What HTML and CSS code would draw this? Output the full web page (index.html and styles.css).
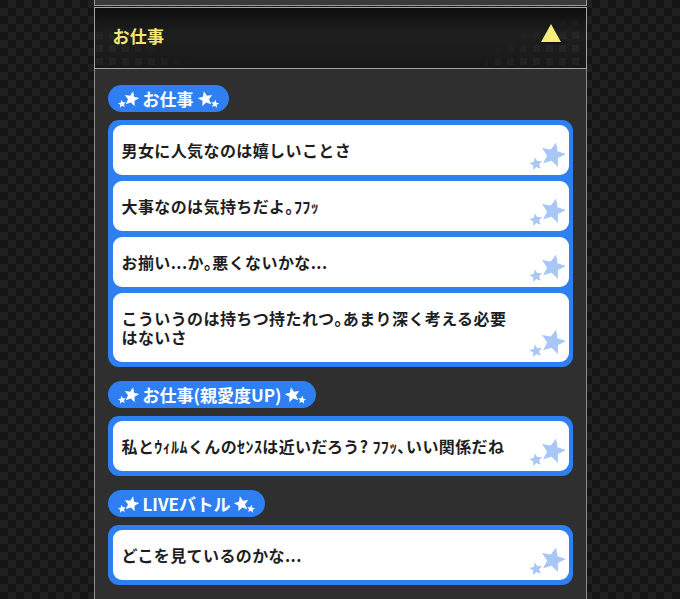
FILE: index.html
```html
<!DOCTYPE html>
<html lang="ja">
<head>
    <meta charset="UTF-8">
    <meta name="viewport" content="width=device-width, initial-scale=1.0">
    <title>お仕事</title>
    <link rel="stylesheet" href="styles.css">
</head>
<body>
    <!-- 星の形 (共通) -->
    <svg class="defs" width="0" height="0" aria-hidden="true">
        <defs>
            <polygon id="star" points="0,-10 2.65,-3.64 9.51,-3.09 4.28,1.39 5.88,8.09 0,4.5 -5.88,8.09 -4.28,1.39 -9.51,-3.09 -2.65,-3.64"/>
        </defs>
    </svg>

    <div class="page">
        <div class="prev-panel"></div>

        <div class="panel">
            <div class="panel-head">
                <h2 class="panel-title">お仕事</h2>
                <span class="toggle"></span>
            </div>

            <div class="panel-body">
                <section class="group">
                    <div class="badge">
                        <svg class="badge-stars" viewBox="0 0 22 22"><use href="#star" transform="translate(5 16) rotate(-8) scale(.42)"/><use href="#star" transform="translate(14.5 11) rotate(12) scale(.78)"/></svg>
                        <span>お仕事</span>
                        <svg class="badge-stars" viewBox="0 0 22 22"><use href="#star" transform="translate(7.5 11) rotate(-12) scale(.78)"/><use href="#star" transform="translate(17 16) rotate(8) scale(.42)"/></svg>
                    </div>
                    <ul class="lines">
                        <li class="line">男女に人気なのは嬉しいことさ<svg class="line-stars" viewBox="0 0 40 30"><use href="#star" transform="translate(10 22) rotate(-10) scale(.68)"/><use href="#star" transform="translate(27 13) rotate(14) scale(1.3)"/></svg></li>
                        <li class="line">大事なのは気持ちだよ｡ﾌﾌｯ<svg class="line-stars" viewBox="0 0 40 30"><use href="#star" transform="translate(10 22) rotate(-10) scale(.68)"/><use href="#star" transform="translate(27 13) rotate(14) scale(1.3)"/></svg></li>
                        <li class="line">お揃い...か｡悪くないかな...<svg class="line-stars" viewBox="0 0 40 30"><use href="#star" transform="translate(10 22) rotate(-10) scale(.68)"/><use href="#star" transform="translate(27 13) rotate(14) scale(1.3)"/></svg></li>
                        <li class="line">こういうのは持ちつ持たれつ｡あまり深く考える必要はないさ<svg class="line-stars" viewBox="0 0 40 30"><use href="#star" transform="translate(10 22) rotate(-10) scale(.68)"/><use href="#star" transform="translate(27 13) rotate(14) scale(1.3)"/></svg></li>
                    </ul>
                </section>

                <section class="group">
                    <div class="badge">
                        <svg class="badge-stars" viewBox="0 0 22 22"><use href="#star" transform="translate(5 16) rotate(-8) scale(.42)"/><use href="#star" transform="translate(14.5 11) rotate(12) scale(.78)"/></svg>
                        <span>お仕事(親愛度UP)</span>
                        <svg class="badge-stars" viewBox="0 0 22 22"><use href="#star" transform="translate(7.5 11) rotate(-12) scale(.78)"/><use href="#star" transform="translate(17 16) rotate(8) scale(.42)"/></svg>
                    </div>
                    <ul class="lines">
                        <li class="line">私とｳｨﾙﾑくんのｾﾝｽは近いだろう? ﾌﾌｯ､いい関係だね<svg class="line-stars" viewBox="0 0 40 30"><use href="#star" transform="translate(10 22) rotate(-10) scale(.68)"/><use href="#star" transform="translate(27 13) rotate(14) scale(1.3)"/></svg></li>
                    </ul>
                </section>

                <section class="group">
                    <div class="badge">
                        <svg class="badge-stars" viewBox="0 0 22 22"><use href="#star" transform="translate(5 16) rotate(-8) scale(.42)"/><use href="#star" transform="translate(14.5 11) rotate(12) scale(.78)"/></svg>
                        <span>LIVEバトル</span>
                        <svg class="badge-stars" viewBox="0 0 22 22"><use href="#star" transform="translate(7.5 11) rotate(-12) scale(.78)"/><use href="#star" transform="translate(17 16) rotate(8) scale(.42)"/></svg>
                    </div>
                    <ul class="lines">
                        <li class="line">どこを見ているのかな...<svg class="line-stars" viewBox="0 0 40 30"><use href="#star" transform="translate(10 22) rotate(-10) scale(.68)"/><use href="#star" transform="translate(27 13) rotate(14) scale(1.3)"/></svg></li>
                    </ul>
                </section>
            </div>
        </div>
    </div>
</body>
</html>
```

FILE: styles.css
```css
body {
    margin: 0;
    background: #181818 repeating-conic-gradient(#202020 0 25%, #141414 0 50%) 0 0 / 16px 16px;
    font-family: "Noto Sans CJK JP", "Noto Sans", sans-serif;
}
.defs {
    position: absolute;
}
.page {
    width: 493px;
    margin: 0 auto;
}
.prev-panel {
    height: 5px;
    background-color: #3a3a3a;
    border: 1px solid #9a9a9a;
    border-top: none;
}
.panel {
    margin-top: 1px;
}
/* 見出し */
.panel-head {
    position: relative;
    box-sizing: border-box;
    height: 62px;
    display: flex;
    align-items: center;
    justify-content: space-between;
    padding: 0 25px 6px 18px;
    border: 1px solid #a3a3a3;
    background: linear-gradient(#0e0e0e, #1f1f1f 45%, #181818);
}
.panel-head::before,
.panel-head::after {
    content: "";
    position: absolute;
    bottom: 3px;
    background: conic-gradient(at 7px 7px, transparent 75%, rgba(255, 255, 255, 0.045) 0) 0 0 / 13px 13px;
}
.panel-head::before {
    left: 1px;
    width: 100px;
    height: 46px;
    -webkit-mask-image: linear-gradient(to top right, #000 25%, transparent 55%);
    mask-image: linear-gradient(to top right, #000 25%, transparent 55%);
}
.panel-head::after {
    right: 1px;
    width: 100px;
    height: 46px;
    background-position: right 0 top 0;
    -webkit-mask-image: linear-gradient(to top left, #000 30%, transparent 70%);
    mask-image: linear-gradient(to top left, #000 30%, transparent 70%);
}
.panel-title {
    position: relative;
    z-index: 1;
    margin: 0;
    font-size: 17px;
    font-weight: bold;
    letter-spacing: 0.3px;
    color: #f4e872;
}
.toggle {
    position: relative;
    z-index: 1;
    width: 0;
    height: 0;
    margin-bottom: 4px;
    border-left: 10px solid transparent;
    border-right: 10px solid transparent;
    border-bottom: 18px solid #f6ec7a;
    filter: drop-shadow(0 1px 1px rgba(0, 0, 0, 0.6));
}
/* 本文 */
.panel-body {
    background-color: #2f2f2f;
    border: 1px solid #8e8e8e;
    border-top: none;
    padding: 16px 13px 30px;
}
.group + .group {
    margin-top: 14px;
}
.badge {
    display: flex;
    width: fit-content;
    align-items: center;
    gap: 4px;
    height: 27px;
    padding: 0 9px;
    border-radius: 14px;
    background-color: #2e80f2;
    color: #fff;
    font-size: 17px;
    font-weight: bold;
    line-height: 27px;
}
.badge-stars {
    width: 22px;
    height: 22px;
    fill: #fff;
}
.lines {
    list-style: none;
    margin: 8px 0 0;
    padding: 5px 4px 5px 5px;
    display: flex;
    flex-direction: column;
    gap: 6px;
    background-color: #2e80f2;
    border-radius: 11px;
}
.line {
    position: relative;
    padding: 16px 52px 15px 9px;
    background-color: #fff;
    border-radius: 9px;
    color: #1e1e1e;
    font-size: 16px;
    font-weight: bold;
    line-height: 19px;
    letter-spacing: 0.4px;
}
.line-stars {
    position: absolute;
    right: 3px;
    bottom: 3px;
    width: 40px;
    height: 30px;
    fill: #a9c7f6;
}
```
